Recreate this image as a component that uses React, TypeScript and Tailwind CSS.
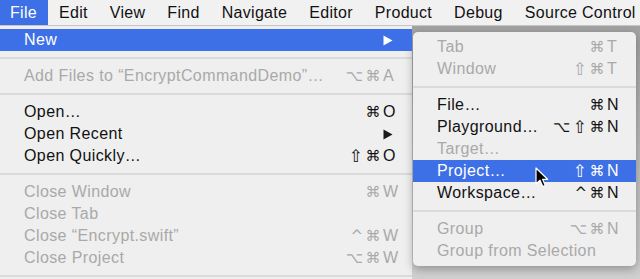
import React from "react";

type Item =
  | { sep: true }
  | {
      sep?: false;
      label: string;
      mods?: string;
      keyc?: string;
      disabled?: boolean;
      active?: boolean;
      arrow?: boolean;
      cursor?: boolean;
    };

const mainItems: Item[] = [
  { label: "New", active: true, arrow: true },
  { sep: true },
  { label: "Add Files to \u201cEncryptCommandDemo\u201d\u2026", mods: "\u2325\u2318", keyc: "A", disabled: true },
  { sep: true },
  { label: "Open\u2026", mods: "\u2318", keyc: "O" },
  { label: "Open Recent", arrow: true },
  { label: "Open Quickly\u2026", mods: "\u21e7\u2318", keyc: "O" },
  { sep: true },
  { label: "Close Window", mods: "\u2318", keyc: "W", disabled: true },
  { label: "Close Tab", disabled: true },
  { label: "Close \u201cEncrypt.swift\u201d", mods: "^\u2318", keyc: "W", disabled: true },
  { label: "Close Project", mods: "\u2325\u2318", keyc: "W", disabled: true },
  { sep: true },
];

const subItems: Item[] = [
  { label: "Tab", mods: "\u2318", keyc: "T", disabled: true },
  { label: "Window", mods: "\u21e7\u2318", keyc: "T", disabled: true },
  { sep: true },
  { label: "File\u2026", mods: "\u2318", keyc: "N" },
  { label: "Playground\u2026", mods: "\u2325\u21e7\u2318", keyc: "N" },
  { label: "Target\u2026", disabled: true },
  { label: "Project\u2026", mods: "\u21e7\u2318", keyc: "N", active: true, cursor: true },
  { label: "Workspace\u2026", mods: "^\u2318", keyc: "N" },
  { sep: true },
  { label: "Group", mods: "\u2325\u2318", keyc: "N", disabled: true },
  { label: "Group from Selection", disabled: true },
];

const menuBar = ["File", "Edit", "View", "Find", "Navigate", "Editor", "Product", "Debug", "Source Control"];

function Arrow({ white }: { white?: boolean }) {
  return (
    <svg width="10" height="11" viewBox="0 0 10 11">
      <path d="M0.5 0.5 L9.5 5.5 L0.5 10.5 Z" fill={white ? "#ffffff" : "#1a1a1a"} />
    </svg>
  );
}

function Cursor() {
  return (
    <svg className="absolute left-[122px] top-[7px]" width="14" height="22" viewBox="0 0 14 22">
      <path
        d="M1 1 L1 17 L5 13.2 L7.8 19.6 L10.3 18.5 L7.6 12.3 L12.6 12.3 Z"
        fill="#000"
        stroke="#fff"
        strokeWidth="1.2"
        strokeLinejoin="round"
      />
    </svg>
  );
}

// modifier glyphs: shift is drawn bigger so it reads like the mac one
function Mods({ text }: { text: string }) {
  return (
    <span className="whitespace-nowrap font-['DejaVu_Sans',sans-serif] text-[15px] tracking-[2.5px] flex items-center">
      {text.split("").map((c, i) => (
        <span key={i} className={c === "\u21e7" ? "text-[17px]" : ""}>
          {c}
        </span>
      ))}
    </span>
  );
}

function Menu({ items, keyW, pr }: { items: Item[]; keyW: string; pr: string }) {
  return (
    <>
      {items.map((it, i) => {
        if (it.sep) {
          return (
            <div key={i} className="h-[14px] flex items-center">
              <div className="h-[2px] w-full bg-[#dadada]" />
            </div>
          );
        }
        const color = it.active ? "text-white bg-[#3d6fe6]" : it.disabled ? "text-[#a9a9a9]" : "text-[#111]";
        return (
          <div key={i} className={`relative h-[22px] flex items-center pl-[24px] ${pr} ${color}`}>
            <span className="flex-1 whitespace-nowrap">{it.label}</span>
            {it.mods && <Mods text={it.mods} />}
            <span className={`${keyW} flex items-center`}>{it.arrow ? <Arrow white={it.active} /> : it.keyc}</span>
            {it.cursor && <Cursor />}
          </div>
        );
      })}
    </>
  );
}

export default function App() {
  return (
    <div className="w-[640px] h-[279px] overflow-hidden bg-[#c9c9c9] font-['Liberation_Sans',Arial,sans-serif] text-[16px] tracking-[0.4px] leading-none">
      <div className="h-[26px] flex bg-[#f1f1f1] border-b border-[#c6c6c6] -ml-px tracking-[0.3px]">
        {menuBar.map((m, i) => (
          <div
            key={m}
            className={`px-[11px] flex items-center whitespace-nowrap ${i === 0 ? "bg-[#3d6fe6] text-white" : "text-[#111]"}`}
          >
            {m}
          </div>
        ))}
      </div>
      <div className="flex">
        <div className="w-[412px] shrink-0 bg-[#efefef] pt-[3px]">
          <Menu items={mainItems} keyW="w-[19px]" pr="pr-[10px]" />
        </div>
        <div className="flex-1 h-[253px] bg-gradient-to-b from-[#a2a2a2] via-[#bdbdbd] to-[#d0d0d0] pl-[1px] pt-[6px]">
          <div className="w-[223px] rounded-[5px] bg-[#efefef] py-[4px] shadow-[0_3px_10px_rgba(0,0,0,0.3)]">
            <Menu items={subItems} keyW="w-[16px]" pr="pr-[13px]" />
          </div>
        </div>
      </div>
    </div>
  );
}
